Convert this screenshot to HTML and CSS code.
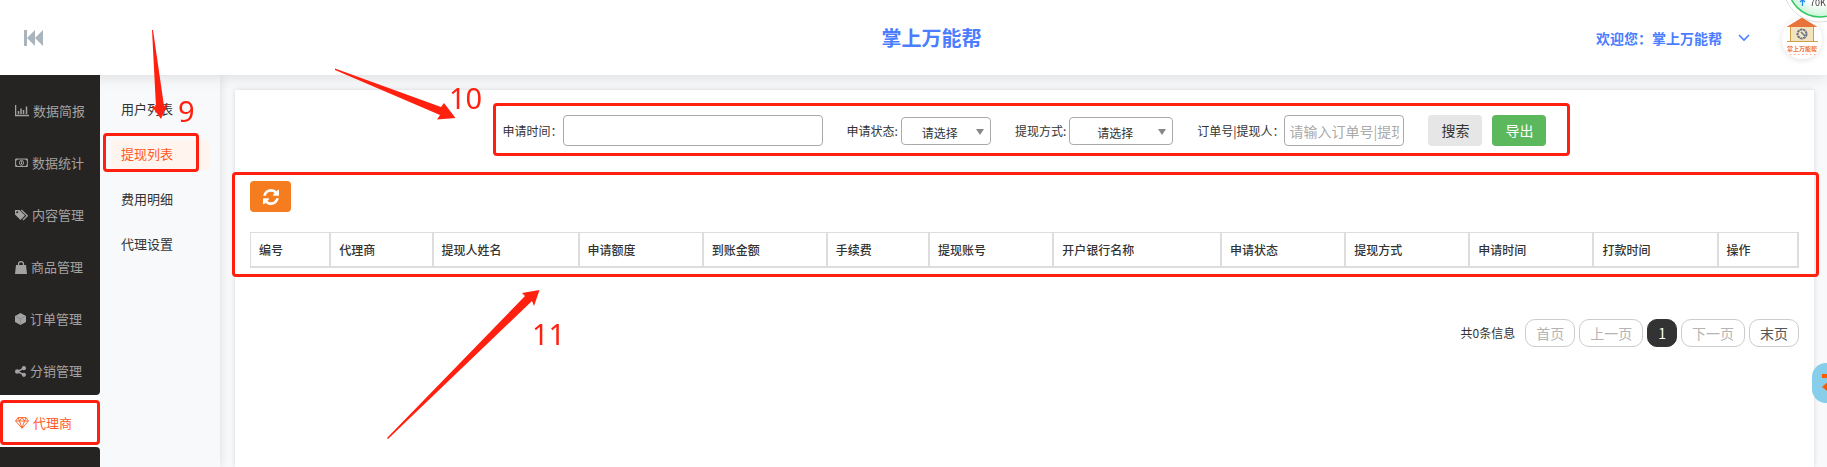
FILE: index.html
```html
<!DOCTYPE html>
<html lang="zh-CN">
<head>
<meta charset="utf-8">
<title>掌上万能帮</title>
<link rel="stylesheet" href="styles.css">
</head>
<body>
<header class="header">
  <button class="toggle" type="button" aria-label="收起菜单">
    <svg width="20" height="16" viewBox="0 0 20 16"><path d="M0 0h3v16H0zM11 0v16L3 8zM19 0v16l-8-8z" fill="currentColor"/></svg>
  </button>
  <div class="header-inner">
    <h1 class="title">掌上万能帮</h1>
    <a class="user" href="#">
      <span>欢迎您：掌上万能帮</span>
      <svg width="12" height="8" viewBox="0 0 12 8"><path d="M1 1l5 5 5-5" fill="none" stroke="currentColor" stroke-width="1.6"/></svg>
    </a>
  </div>
</header>

<div class="body">
  <nav class="sidebar">
    <div class="menu menu-top">
      <a class="menu-item" href="#">
        <svg width="14" height="12" viewBox="0 0 14 12"><path d="M.5 0v10.500H14M3.500 6v3M6 3.500v5.500M8.500 5v4M11.500 1.500v7.500" fill="none" stroke="currentColor" stroke-width="1.500"/></svg>数据简报</a>
      <a class="menu-item" href="#">
        <svg width="13" height="10" viewBox="0 0 13 10"><path d="M.6 1h11.800v7.500H.6z" fill="none" stroke="currentColor"/><path d="M1 1h2L1 3zM12 1h-2l2 2zM1 8.500h2l-2-2zM12 8.500h-2l2-2z" fill="currentColor"/><ellipse cx="6.500" cy="4.800" rx="2" ry="2.500" fill="none" stroke="currentColor"/><path d="M6.500 3.200v3" stroke="currentColor"/></svg>数据统计</a>
      <a class="menu-item" href="#">
        <svg width="13" height="12" viewBox="0 0 13 12"><path d="M0 1h4.500l5.500 5.500-4.500 4.500L0 5.500z" fill="currentColor"/><path d="M6.300 1l6 5.700-4.300 4.300" fill="none" stroke="currentColor" stroke-width="1.300"/><circle cx="2.200" cy="3.200" r="1" fill="#262422"/></svg>内容管理</a>
      <a class="menu-item" href="#">
        <svg width="12" height="13" viewBox="0 0 12 13"><path d="M1 4h10l1 9H0z" fill="currentColor"/><path d="M3.500 6V3a2.500 2.300 0 0 1 5 0v3" fill="none" stroke="currentColor" stroke-width="1.200"/></svg>商品管理</a>
      <a class="menu-item" href="#">
        <svg width="11" height="12" viewBox="0 0 11 12"><path d="M5.500 0L11 3v6l-5.500 3L0 9V3z" fill="currentColor"/><path d="M1 3.500l4.500 2.300L10 3.500M5.500 6v5" fill="none" stroke="#777" stroke-width=".5"/></svg>订单管理</a>
      <a class="menu-item" href="#">
        <svg width="11" height="11" viewBox="0 0 11 11"><path d="M9 2.200L2.500 5.500 9 8.800" fill="none" stroke="currentColor" stroke-width="1.500"/><circle cx="8.900" cy="2.200" r="2.100" fill="currentColor"/><circle cx="2.200" cy="5.500" r="2.200" fill="currentColor"/><circle cx="8.900" cy="8.800" r="2.100" fill="currentColor"/></svg>分销管理</a>
    </div>
    <a class="menu-item active" href="#">
      <svg width="14" height="12" viewBox="0 0 14 12"><path d="M3 .6h8L13.400 4 7 11.300.6 4zM.6 4h12.800M3 .6L4.500 4 7 11l2.500-7L11 .6M4.500 4L7 .6 9.500 4" fill="none" stroke="currentColor" stroke-width=".9"/></svg>代理商</a>
    <div class="menu menu-rest"></div>
  </nav>

  <nav class="subnav">
    <a class="sub-item" href="#">用户列表</a>
    <a class="sub-item current" href="#">提现列表</a>
    <a class="sub-item" href="#">费用明细</a>
    <a class="sub-item" href="#">代理设置</a>
  </nav>

  <main class="content">
    <section class="card">
      <form class="filters">
        <div class="field">
          <label for="time">申请时间：</label>
          <input class="text-input wide" id="time" type="text">
        </div>
        <div class="field field-select">
          <label for="status">申请状态:</label>
          <span class="select-wrap"><select class="select" id="status"><option>请选择</option></select></span>
        </div>
        <div class="field field-select">
          <label for="method">提现方式:</label>
          <span class="select-wrap"><select class="select select-wide" id="method"><option>请选择</option></select></span>
        </div>
        <div class="field">
          <label for="keyword">订单号|提现人：</label>
          <input class="text-input" id="keyword" type="text" placeholder="请输入订单号|提现人">
        </div>
        <div class="actions">
          <button class="btn btn-search" type="button">搜索</button>
          <button class="btn btn-export" type="button">导出</button>
        </div>
      </form>

      <button class="btn btn-refresh" type="button" aria-label="刷新">
        <svg width="16" height="16" viewBox="0 0 1536 1536"><path fill="currentColor" d="M1511 928q0 5-1 7-64 268-268 434.500T764 1536q-146 0-282.500-55T238 1324l-129 129q-19 19-45 19t-45-19-19-45V960q0-26 19-45t45-19h448q26 0 45 19t19 45-19 45l-137 137q71 66 161 102t187 36q134 0 250-65t186-179q11-17 53-117 8-23 30-23h192q13 0 22.500 9.500t9.500 22.500zm25-800v448q0 26-19 45t-45 19h-448q-26 0-45-19t-19-45 19-45l138-138Q969 256 768 256q-134 0-250 65T332 500q-11 17-53 117-8 23-30 23H50q-13 0-22.500-9.500T18 608v-7q65-268 270-434.500T768 0q146 0 284 55.500T1297 212l130-129q19-19 45-19t45 19 19 45z"/></svg>
      </button>

      <table class="table">
        <thead>
          <tr><th>编号</th><th>代理商</th><th>提现人姓名</th><th>申请额度</th><th>到账金额</th><th>手续费</th><th>提现账号</th><th>开户银行名称</th><th>申请状态</th><th>提现方式</th><th>申请时间</th><th>打款时间</th><th>操作</th></tr>
        </thead>
      </table>

      <div class="pager">
        <span class="total">共0条信息</span>
        <button class="page" type="button" disabled>首页</button>
        <button class="page" type="button" disabled>上一页</button>
        <button class="page page-current" type="button">1</button>
        <button class="page" type="button" disabled>下一页</button>
        <button class="page" type="button">末页</button>
      </div>
    </section>
  </main>
</div>

<svg class="floating" width="60" height="64" viewBox="0 0 60 64">
  <defs>
    <radialGradient id="glow"><stop offset=".6" stop-color="#fff"/><stop offset="1" stop-color="#c9f5d6"/></radialGradient>
    <filter id="soft" x="-30%" y="-30%" width="160%" height="160%"><feDropShadow dx="0" dy="1" stdDeviation="3" flood-opacity=".12"/></filter>
  </defs>
  <circle cx="35" cy="39" r="20" fill="#fff" filter="url(#soft)"/>
  <path d="M23.500 26h23v15.500h-23z" fill="#f3e3bd" stroke="#c9a24a"/>
  <path d="M35 17.500l15.500 9.500h-31z" fill="#e8743b"/>
  <path d="M20 41.500h31" stroke="#c9a24a"/>
  <circle cx="35" cy="34" r="4.500" fill="none" stroke="#66728a" stroke-width="2" stroke-dasharray="2.500 .6"/>
  <path d="M34 32l4 4" stroke="#66728a" stroke-width="1.500"/>
  <text x="35" y="51" text-anchor="middle" class="logo-text">掌上万能帮</text>
  <path d="M23 54.500h26" stroke="#f3b08e" stroke-dasharray="1.500 2.500"/>
  <circle cx="53" cy="-15" r="37" fill="#fff" stroke="#ddd"/>
  <circle cx="53" cy="-15" r="32" fill="url(#glow)" stroke="#2fc863" stroke-width="1.500"/>
  <path d="M35.500 6V0M33 2l2.500-2.500L38 2" fill="none" stroke="#1e8cf0" stroke-width="1.300"/>
  <text x="43" y="6" class="speed-text">70K</text>
</svg>

<button class="side-tab" type="button" aria-label="展开">
  <svg width="20" height="22" viewBox="0 0 20 22"><path d="M0 2h18v4H0zM0 15l9-8 9 8-9 7z" fill="#ff5a00"/></svg>
</button>

<div class="marks">
  <div class="mark mark-filters"></div>
  <div class="mark mark-table"></div>
  <div class="mark mark-menu"></div>
  <div class="mark mark-sub"></div>
  <svg class="arrows" width="600" height="467" viewBox="0 0 600 467">
    <g fill="#ff2010">
      <path d="M152 30h1l11 76 4-3-7 16-10-14 5 2z"/>
      <path d="M335 68.500l106 38.500 3-4 11.500 15-18.500 1.500 3-4.500L335 70z"/>
      <path d="M387 438l138-142-3-3 17.500-3-5.500 16-2-5L388 439z"/>
      <text x="178" y="122">9</text>
      <text x="449" y="109">10</text>
      <text x="532" y="345">11</text>
    </g>
  </svg>
</div>
</body>
</html>
```

FILE: styles.css
```css
* { box-sizing: border-box; }

body {
  margin: 0;
  min-height: 100vh;
  display: flex;
  flex-direction: column;
  overflow: hidden;
  background: #f8f9fb;
  color: #333;
  font: 12px/20px "Noto Sans CJK SC", sans-serif;
}

a { color: inherit; text-decoration: none; }
button, input, select { font-family: inherit; color: inherit; }

.header {
  position: relative;
  z-index: 1;
  display: flex;
  height: 75px;
  background: #fff;
  box-shadow: 0 0 16px rgba(0, 0, 0, .14);
}
.toggle {
  width: 60px;
  padding: 4px 0 0 24px;
  border: 0;
  background: none;
  color: #a9b4bd;
  text-align: left;
}
.header-inner {
  flex: 1;
  display: grid;
  grid-template-columns: 1fr auto 1fr;
  align-items: center;
  margin-right: 24px;
  color: #4a7dff;
}
.title {
  grid-column: 2;
  margin: 0;
  font-size: 20px;
  line-height: 28px;
}
.user {
  justify-self: end;
  display: flex;
  align-items: center;
  gap: 16px;
  padding-right: 53px;
  font-size: 14px;
  font-weight: bold;
}

.body { flex: 1; display: flex; }

.sidebar {
  position: relative;
  z-index: 2;
  display: flex;
  flex-direction: column;
  width: 100px;
  background: #fff;
}
.menu { background: #262422; color: #a3a3a3; }
.menu-top { padding-top: 8px; border-radius: 0 0 4px 0; }
.menu-rest { flex: 1; border-radius: 0 4px 0 0; }
.menu-item {
  display: flex;
  align-items: center;
  gap: 4px;
  height: 52px;
  padding: 4px 0 0 15px;
  font-size: 13px;
}
.active { color: #ff5a1f; }

.subnav {
  width: 120px;
  padding: 20px 11px;
  background: #f8f9fb;
  box-shadow: 0 0 10px rgba(0, 0, 0, .12);
}
.sub-item {
  display: block;
  margin-bottom: 15px;
  padding: 0 10px 2px;
  border-radius: 4px;
  font-size: 13px;
  line-height: 28px;
}
.current { background: #fff4ee; color: #ff5a1f; }

.content { flex: 1; display: flex; padding: 15px 13px 0 15px; }
.card {
  flex: 1;
  padding: 25px 15px;
  background: #fff;
  box-shadow: 0 0 5px rgba(0, 0, 0, .14);
}

.filters {
  display: flex;
  justify-content: center;
  align-items: center;
  gap: 24px;
  margin-bottom: 35px;
}
.field { display: flex; align-items: center; }
.field-select { gap: 3px; }
.text-input {
  width: 120px;
  height: 31px;
  padding: 0 4px;
  border: 1px solid #aaa;
  border-radius: 4px;
  background: #fff;
  font-size: 14px;
}
.wide { width: 260px; }
.text-input::placeholder { color: #aaa; }
.select-wrap { position: relative; display: flex; }
.select-wrap::after {
  content: "";
  position: absolute;
  top: 12px;
  right: 7px;
  border: 4px solid transparent;
  border-top: 6px solid #888;
  border-bottom: 0;
  pointer-events: none;
}
.select {
  appearance: none;
  width: 90px;
  height: 28px;
  padding: 3px 12px 0 0;
  border: 1px solid #aaa;
  border-radius: 4px;
  background: #fff;
  font-size: 12px;
  text-align: center;
}
.select-wide { width: 104px; }

.actions { display: flex; gap: 10px; }
.btn {
  height: 31px;
  padding: 0 13px;
  border: 0;
  border-radius: 4px;
  font-size: 14px;
  line-height: 31px;
}
.btn-search { background: #e6e6e6; }
.btn-export { background: #5cb85c; color: #fff; }
.btn-refresh {
  display: flex;
  align-items: center;
  margin-bottom: 20px;
  padding: 0 12px 0 13px;
  background: #f57c1f;
  color: #fff;
}

.table {
  width: 100%;
  border: 1px solid #ddd;
  border-width: 1px 0 0 1px;
  border-spacing: 0;
}
.table th {
  padding: 7px 10px 6px 8px;
  border: 2px solid #ddd;
  border-width: 0 2px 2px 0;
  font-weight: 500;
  text-align: left;
  white-space: nowrap;
}

.pager {
  display: flex;
  justify-content: flex-end;
  align-items: center;
  gap: 4px;
  margin-top: 51px;
}
.total { margin-right: 6px; }
.page {
  height: 28px;
  padding: 0 10px;
  border: 1px solid #ccc;
  border-radius: 10px;
  background: #fff;
  color: #555;
  font-size: 14px;
  line-height: 24px;
}
.page:disabled { color: #b4b4b4; }
.page-current { border-color: #333; background: #333; color: #fff; }

.floating { position: fixed; top: 0; right: 0; z-index: 3; }
.logo-text { fill: #f2703a; font-size: 6px; font-weight: bold; }
.speed-text { fill: #333; font-size: 9px; }

.side-tab {
  position: fixed;
  top: 363px;
  right: -25px;
  z-index: 3;
  width: 40px;
  height: 40px;
  padding: 4px 10px 0;
  border: 0;
  border-radius: 14px;
  background: #87ceeb;
}

.marks {
  position: absolute;
  inset: 0;
  z-index: 4;
  pointer-events: none;
}
.mark {
  position: absolute;
  border: 3px solid #ff2010;
  border-radius: 4px;
}
.mark-filters { top: 103px; left: 493px; right: 257px; height: 53px; }
.mark-table { top: 172px; left: 232px; right: 8px; height: 105px; }
.mark-menu { top: 400px; left: 0; width: 100px; height: 45px; }
.mark-sub { top: 133px; left: 103px; width: 96px; height: 39px; }
.arrows { display: block; font: 29px "Noto Sans", sans-serif; }
```
